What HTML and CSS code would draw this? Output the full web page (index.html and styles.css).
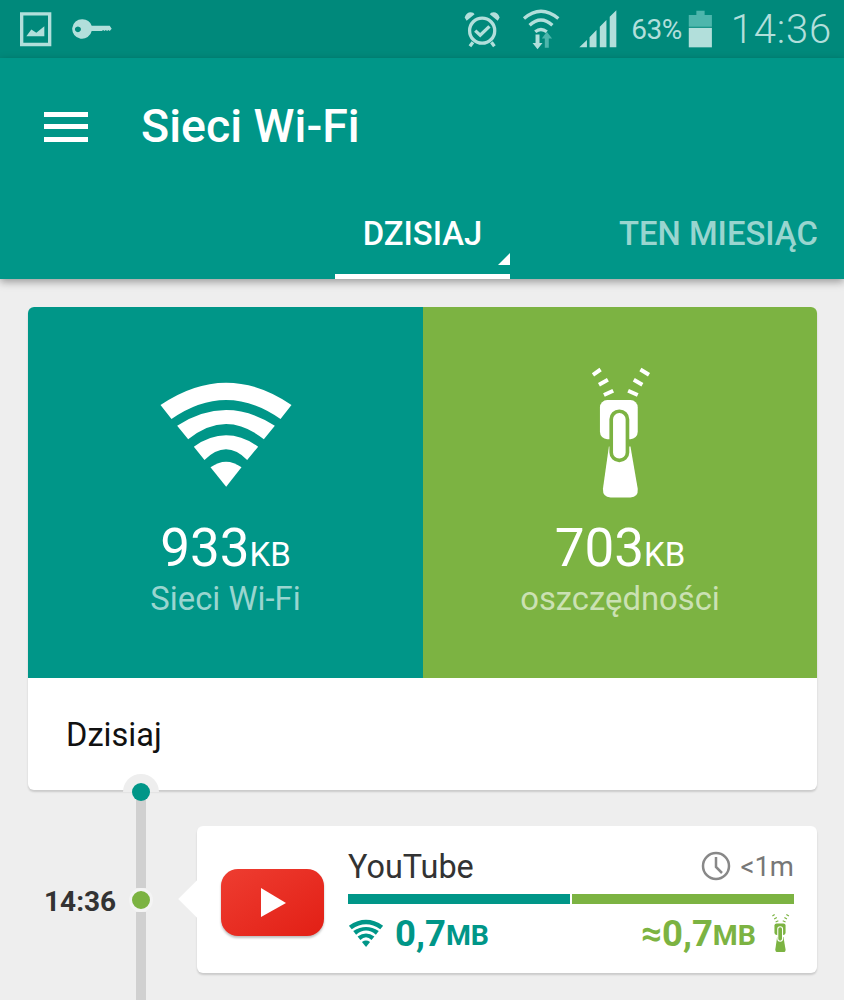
FILE: index.html
```html
<!DOCTYPE html>
<html lang="pl">
<head>
  <meta charset="UTF-8" />
  <meta name="viewport" content="width=device-width, initial-scale=1.0" />
  <title>Sieci Wi-Fi</title>
  <link rel="stylesheet" href="styles.css">
</head>
<body>
  <svg class="defs" width="0" height="0">
    <symbol id="wifi" viewBox="80 60 413 330">
      <path d="M90 135Q287 1 483 135L450 177Q287 63 123 177Z" />
      <path d="M140 197Q287 103 433 197L400 238Q287 146 173 238Z" />
      <path d="M190 260Q287 192 383 260L350 300Q287 236 222 300Z" />
      <path d="M240 322Q287 288 333 322L287 380Z" />
    </symbol>
    <symbol id="zip" viewBox="85 15 190 410">
      <g class="zip-dash">
        <path d="M97 46L120 30M115 76L142 61M130 107L158 94M266 46L240 30M246 76L220 61M232 107L203 94" />
      </g>
      <rect x="118" y="122" width="114" height="118" rx="22" />
      <path d="M145 262L127 390Q126 416 150 416H210Q234 416 232 390L210 262Z" />
      <rect class="zip-ring" x="152" y="156" width="49" height="148" rx="24" />
    </symbol>
  </svg>

  <div class="status">
    <svg class="ic-image" viewBox="55 30 105 113"><path class="line" d="M66 41H150V133H66Z" /><path d="M80 108L95 88L110 98L134 78V108Z" /></svg>
    <svg class="ic-key" viewBox="215 55 125 66"><path fill-rule="evenodd" d="M247 58a30 30 0 0 1 28 20H330l6 9-6 7-4-3-4 3-4-3-4 3-4-3-4 3H275a30 30 0 1 1-28-36Zm-14 22a9 9 0 1 0 .1 0Z" /></svg>
    <div class="status-right">
      <svg class="ic-alarm" viewBox="75 25 115 120">
        <circle class="line" cx="133" cy="90" r="38" />
        <path class="line" d="M112 90L127 104L155 77M105 125L96 137M161 125L170 137" />
        <path d="M80 50Q88 30 106 36L110 40L86 60ZM186 50Q178 30 160 36L156 40L180 60Z" />
      </svg>
      <svg class="ic-wifi" viewBox="245 20 125 130">
        <path class="line" d="M256 52Q307 8 360 52M273 72Q307 40 342 72M290 92Q307 78 325 92" />
        <path d="M291 100H303V126H312L297 145L282 126H291Z" />
        <path class="dim" d="M319 140H331V112H341L325 92L310 112H319Z" />
      </svg>
      <svg class="ic-signal" viewBox="420 25 115 120">
        <path d="M421 140L444 118V140ZM452 140V110L473 88V140ZM483 140V78L503 58V140ZM513 140V48L533 28V140Z" />
      </svg>
      <span class="battery-text">63%</span>
      <svg class="ic-battery" viewBox="750 25 75 115">
        <path class="dim" d="M775 27H800V40H822V76H752V40H775Z" />
        <path d="M752 79H822V138H752Z" />
      </svg>
      <span class="clock">14:36</span>
    </div>
  </div>

  <header class="appbar">
    <div class="toolbar">
      <div class="menu"><i></i><i></i><i></i></div>
      <h1>Sieci Wi-Fi</h1>
    </div>
    <nav class="tabs">
      <div class="tab active">DZISIAJ<span class="corner"></span></div>
      <div class="tab">TEN MIESIĄC</div>
    </nav>
  </header>

  <main>
    <section class="summary">
      <div class="panels">
        <div class="panel teal">
          <svg class="big-wifi"><use href="#wifi" /></svg>
          <div class="amount">933<small>KB</small></div>
          <div class="caption">Sieci Wi-Fi</div>
        </div>
        <div class="panel green">
          <svg class="big-zip"><use href="#zip" /></svg>
          <div class="amount">703<small>KB</small></div>
          <div class="caption">oszczędności</div>
        </div>
      </div>
      <div class="day">Dzisiaj</div>
      <span class="top-dot"></span>
    </section>

    <section class="entry">
      <div class="time">14:36</div>
      <div class="rail"><span class="line-a"></span><span class="dot"></span><span class="line-b"></span></div>
      <article class="app-card">
        <svg class="yt" viewBox="0 0 103 68">
          <defs>
            <linearGradient id="ytgrad" x1="0" y1="0" x2="1" y2="1">
              <stop offset="0" stop-color="#ee3d31" />
              <stop offset="1" stop-color="#e21f15" />
            </linearGradient>
          </defs>
          <rect width="103" height="67" rx="17" fill="url(#ytgrad)" />
          <path d="M40 19L65 34L40 48Z" fill="#fff" />
        </svg>
        <div class="info">
          <div class="info-top">
            <span class="name">YouTube</span>
            <span class="duration">
              <svg class="ic-clock" viewBox="0 0 30 30"><circle cx="15" cy="15" r="13" /><path d="M15 6V16L21 22" /></svg>
              &lt;1m
            </span>
          </div>
          <div class="bars"><span class="bar-teal"></span><span class="bar-green"></span></div>
          <div class="stats">
            <span class="stat stat-teal"><svg class="small-wifi"><use href="#wifi" /></svg>0,7<small>MB</small></span>
            <span class="stat stat-green">≈0,7<small>MB</small><svg class="small-zip"><use href="#zip" /></svg></span>
          </div>
        </div>
      </article>
    </section>
  </main>
</body>
</html>
```

FILE: styles.css
```css
:root {
  --teal: #009688;
  --teal-dark: #00897b;
  --green: #7cb342;
  --icon: #b2dfdb;
  --icon-dim: #4db6ac;
}

body {
  margin: 0;
  width: 844px;
  height: 1000px;
  overflow: hidden;
  background: #eeeeee;
  font-family: Roboto, sans-serif;
}

.defs {
  display: block;
  height: 0;
}

/* status bar */
.status {
  height: 58px;
  background: var(--teal-dark);
  color: var(--icon);
  display: flex;
  align-items: center;
  padding: 0 12px 0 18px;
  fill: var(--icon);
}

.status .line {
  fill: none;
  stroke: var(--icon);
  stroke-width: 10;
}

.status .dim {
  fill: var(--icon-dim);
}

.ic-image { width: 35px; height: 38px; }
.ic-key { width: 41px; height: 22px; margin-left: 19px; }

.status-right {
  margin-left: auto;
  display: flex;
  align-items: center;
}

.ic-alarm { width: 38px; height: 40px; }
.ic-wifi { width: 42px; height: 43px; margin-left: 19px; }
.ic-signal { width: 38px; height: 40px; margin-left: 17px; }

.battery-text {
  font-size: 28px;
  margin-left: 14px;
  letter-spacing: -0.5px;
}

.ic-battery { width: 25px; height: 38px; margin-left: 6px; }

.clock {
  font-size: 40px;
  margin-left: 18px;
  font-weight: 300;
  letter-spacing: 0.8px;
}

/* app bar */
.appbar {
  height: 221px;
  background: var(--teal);
  box-shadow: 0 3px 8px rgba(0, 0, 0, 0.35);
  position: relative;
  display: flex;
  flex-direction: column;
}

.toolbar {
  height: 136px;
  display: flex;
  align-items: center;
  padding-left: 44px;
}

.menu {
  width: 44px;
  display: flex;
  flex-direction: column;
  gap: 7.5px;
  margin-top: 1px;
}

.menu i {
  display: block;
  height: 5px;
  background: #fff;
}

h1 {
  margin: 0 0 0 53px;
  color: #fff;
  font-size: 46.5px;
  font-weight: 500;
}

.tabs {
  display: flex;
  flex: 1;
  padding-left: 335px;
}

.tab {
  font-size: 32.8px;
  font-weight: 500;
  color: #99d5cf;
  padding-top: 21px;
  margin-left: 109px;
  white-space: nowrap;
}

.tab.active {
  width: 175px;
  margin-left: 0;
  box-sizing: border-box;
  text-align: center;
  color: #fff;
  border-bottom: 5px solid #fff;
  position: relative;
}

.corner {
  position: absolute;
  right: 0;
  bottom: 9px;
  border-style: solid;
  border-width: 0 0 12px 12px;
  border-color: transparent transparent #fff transparent;
}

/* summary card */
main {
  padding: 28px 27px 0 28px;
}

.summary {
  position: relative;
  background: #fff;
  border-radius: 6px;
  box-shadow: 0 2px 2px rgba(0, 0, 0, 0.15);
}

.panels {
  display: grid;
  grid-template-columns: 395px 394px;
  height: 371px;
}

.panel {
  display: flex;
  flex-direction: column;
  align-items: center;
  color: #fff;
  fill: #fff;
}

.panel.teal {
  background: var(--teal);
  border-radius: 6px 0 0 0;
}

.panel.green {
  background: var(--green);
  border-radius: 0 6px 0 0;
  --zip-bg: var(--green);
}

.big-wifi {
  width: 138px;
  height: 110px;
  margin-top: 73px;
}

.big-zip {
  width: 63px;
  height: 137px;
  margin-top: 57px;
  margin-bottom: -11px;
}

.zip-ring {
  stroke: var(--zip-bg);
  stroke-width: 11;
}

.zip-dash path {
  fill: none;
  stroke: currentColor;
  stroke-width: 12;
}

.amount {
  font-size: 53px;
  line-height: 56px;
  margin-top: 30px;
}

.amount small {
  font-size: 33px;
}

.caption {
  font-size: 32.8px;
  line-height: 36px;
  margin-top: -2px;
}

.teal .caption { color: #99d5cf; }
.green .caption { color: #cbe1b3; }

.day {
  height: 112px;
  display: flex;
  align-items: center;
  padding: 2px 0 0 38px;
  box-sizing: border-box;
  font-size: 32.6px;
  color: #111;
}

/* timeline: half halo over the card edge, dot on top of it */
.top-dot {
  position: absolute;
  left: 95px;
  bottom: -2px;
  width: 36px;
  height: 18px;
  background: #eeeeee;
  border-radius: 18px 18px 0 0;
  z-index: 1;
}

.top-dot::after {
  content: "";
  position: absolute;
  left: 9px;
  top: 9px;
  width: 18px;
  height: 18px;
  background: var(--teal);
  border-radius: 50%;
}

.entry {
  display: flex;
  margin-top: 36px;
  padding-left: 16px;
}

.time {
  width: 73px;
  margin-top: 58px;
  line-height: 36px;
  font-size: 28px;
  font-weight: 700;
  color: #333;
}

.rail {
  width: 24px;
  height: 210px;
  margin: -36px 0 0 12px;
  display: flex;
  flex-direction: column;
  align-items: center;
}

.line-a,
.line-b {
  width: 10px;
  background: #d0d0d0;
}

.line-a { height: 98px; }
.line-b { flex: 1; }

.dot {
  width: 18px;
  height: 18px;
  flex: none;
  background: var(--green);
  border: 3px solid #f4f4f4;
  border-radius: 50%;
}

.app-card {
  position: relative;
  margin-left: 44px;
  width: 620px;
  height: 147px;
  box-sizing: border-box;
  padding: 20px 23px 0 24px;
  background: #fff;
  border-radius: 6px;
  box-shadow: 0 2px 2px rgba(0, 0, 0, 0.15);
  display: flex;
  gap: 24px;
}

.app-card::before {
  content: "";
  position: absolute;
  left: -13px;
  top: 59px;
  width: 28px;
  height: 28px;
  background: #fff;
  transform: rotate(45deg);
}

.yt {
  position: relative;
  width: 103px;
  height: 68px;
  flex: none;
  margin-top: 23px;
  filter: drop-shadow(0 2px 1px rgba(0, 0, 0, 0.25));
}

.info {
  flex: 1;
}

.info-top {
  height: 40px;
  display: flex;
  justify-content: space-between;
  align-items: center;
}

.name {
  font-size: 32.4px;
  color: #333;
  padding-top: 2px;
}

.duration {
  display: flex;
  align-items: center;
  gap: 9px;
  font-size: 27.5px;
  color: #777;
}

.ic-clock {
  width: 30px;
  height: 30px;
  fill: none;
  stroke: #888;
  stroke-width: 2.5;
}

.bars {
  display: flex;
  gap: 2px;
  height: 10px;
  margin-top: 8px;
}

.bar-teal,
.bar-green {
  flex: 1;
}

.bar-teal { background: var(--teal); }
.bar-green { background: var(--green); }

.stats {
  display: flex;
  justify-content: space-between;
  margin-top: 6px;
}

.stat {
  display: flex;
  align-items: center;
  height: 46px;
  font-size: 36.5px;
  font-weight: 700;
}

.stat small {
  font-size: 28.5px;
  align-self: center;
  margin-top: 5px;
}

.stat-teal { color: var(--teal); fill: var(--teal); }
.stat-green { color: var(--green); fill: var(--green); --zip-bg: #fff; }

.small-wifi {
  width: 36px;
  height: 29px;
  margin-right: 11px;
}

.small-zip {
  width: 19px;
  height: 40px;
  margin-left: 15px;
  margin-right: 4px;
}
```
